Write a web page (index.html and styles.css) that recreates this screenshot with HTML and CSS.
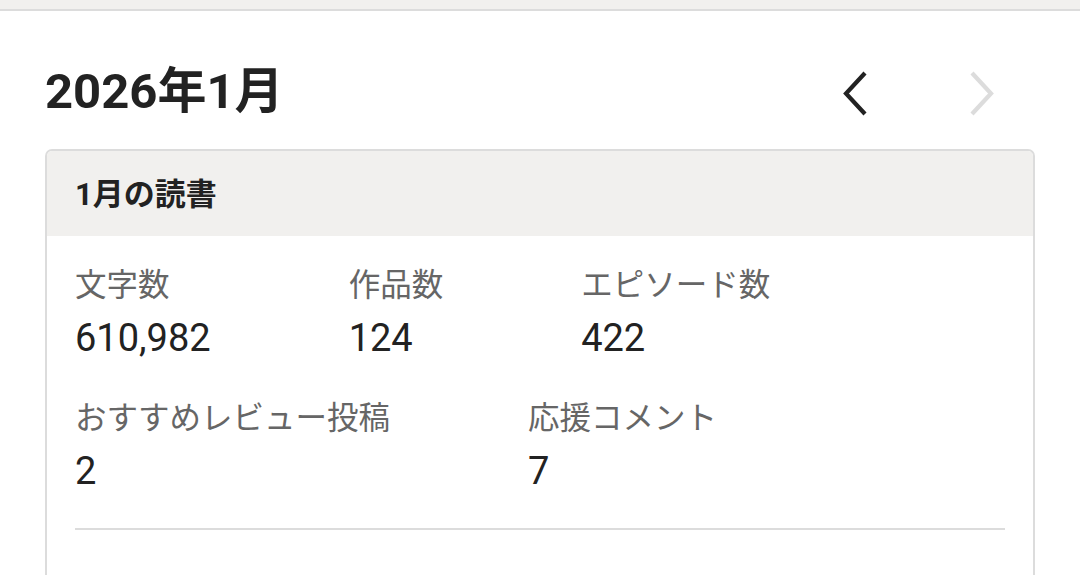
FILE: index.html
```html
<!DOCTYPE html>
<html lang="ja">
<head>
<meta charset="utf-8">
<link rel="stylesheet" href="styles.css">
</head>
<body>
<div class="topbar"></div>
<div class="month-head">
  <h1 class="month-title">2026年1月</h1>
  <div class="nav">
    <button class="nav-btn prev" aria-label="前の月">
      <svg width="30" height="48" viewBox="0 0 30 48"><polyline points="24,4 5,24.5 24,45" fill="none" stroke="#222" stroke-width="4.2"/></svg>
    </button>
    <button class="nav-btn next" aria-label="次の月" disabled>
      <svg width="30" height="48" viewBox="0 0 30 48"><polyline points="6,4 25,24.5 6,45" fill="none" stroke="#dcdcdc" stroke-width="4.2"/></svg>
    </button>
  </div>
</div>
<section class="card">
  <div class="card-header">1月の読書</div>
  <div class="card-body">
    <div class="stats">
      <div class="stat"><div class="stat-label">文字数</div><div class="stat-value">610,982</div></div>
      <div class="stat"><div class="stat-label">作品数</div><div class="stat-value">124</div></div>
      <div class="stat"><div class="stat-label">エピソード数</div><div class="stat-value">422</div></div>
      <div class="stat"><div class="stat-label">おすすめレビュー投稿</div><div class="stat-value">2</div></div>
      <div class="stat"><div class="stat-label">応援コメント</div><div class="stat-value">7</div></div>
    </div>
    <div class="divider"></div>
  </div>
</section>
</body>
</html>
```
FILE: styles.css
```css
* { box-sizing: border-box; }
html, body { margin: 0; padding: 0; background: #fff; }
body {
  font-family: Roboto, "Noto Sans CJK JP", sans-serif;
  color: #222;
  height: 575px;
  overflow: hidden;
}
.topbar {
  height: 11px;
  background: #f1f0ee;
  border-bottom: 2px solid #dcdcdc;
}
.month-head {
  display: flex;
  justify-content: space-between;
  align-items: flex-start;
  height: 138px;
  padding: 56px 84px 0 45px;
}
.month-title {
  margin: 0;
  font-size: 49px;
  font-weight: 700;
  color: #222;
  line-height: 1;
}
.nav {
  display: flex;
  gap: 95px;
  margin-top: 2px;
}
.nav-btn {
  border: 0;
  background: none;
  padding: 0;
  width: 30px;
  height: 48px;
  display: block;
}
.nav-btn svg { display: block; }
.card {
  margin: 0 45px;
  height: 426px;
  border: 2px solid #dcdcdc;
  border-bottom: 0;
  border-radius: 7px 7px 0 0;
  overflow: hidden;
}
.card-header {
  height: 85px;
  background: #f1f0ee;
  display: flex;
  align-items: center;
  padding: 0 0 5px 28px;
  font-size: 31px;
  font-weight: 700;
  color: #222;
}
.card-body {
  padding: 26px 28px 0 28px;
}
.stats {
  display: flex;
  flex-wrap: wrap;
  column-gap: 138px;
  row-gap: 29px;
}
.stat-label {
  font-size: 31.5px;
  line-height: 48px;
  color: #666;
}
.stat-value {
  font-size: 38px;
  line-height: 56px;
  color: #222;
}
.divider {
  height: 2px;
  background: #dcdcdc;
  margin-top: 29px;
}
```
